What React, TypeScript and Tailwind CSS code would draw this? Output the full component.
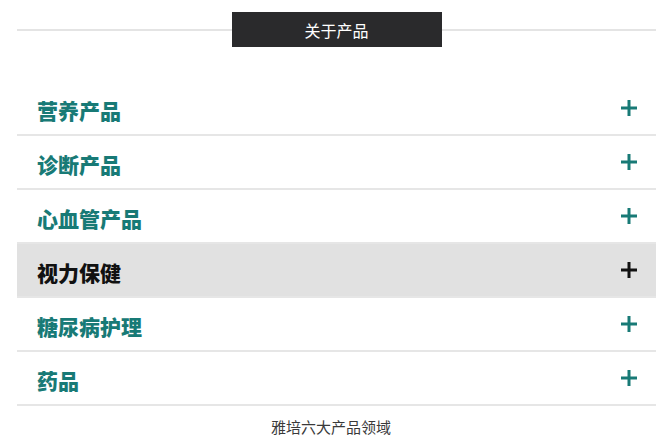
const items = [
  { label: '营养产品', active: false },
  { label: '诊断产品', active: false },
  { label: '心血管产品', active: false },
  { label: '视力保健', active: true },
  { label: '糖尿病护理', active: false },
  { label: '药品', active: false },
];

function Plus({ dark }: { dark: boolean }) {
  return (
    <svg width="18" height="18" viewBox="0 0 18 18" className={dark ? 'text-[#111]' : 'text-[#187a76]'}>
      <path d="M9 1v16M1 9h16" stroke="currentColor" strokeWidth="3" />
    </svg>
  );
}

export default function App() {
  return (
    <div
      className="w-[662px] h-[447px] bg-white overflow-hidden"
      style={{ fontFamily: '"Noto Sans CJK SC", "Liberation Sans", sans-serif' }}
    >
      <div className="relative ml-[17px] mr-[6px] mt-[12px] h-[35px] flex justify-center">
        <div className="absolute left-0 right-0 top-[17px] h-[2px] bg-[#e4e4e4]" />
        <div className="relative w-[210px] h-[35px] bg-[#2a2a2c] text-white text-[16px] flex items-center justify-center">
          关于产品
        </div>
      </div>

      <div className="ml-[17px] mr-[6px] mt-[35px]">
        {items.map((it) => (
          <div
            key={it.label}
            className={`h-[54px] flex items-center justify-between pl-[20px] pr-[18px] border-b-2 border-[#e6e6e6] ${
              it.active ? 'bg-[#e1e1e1]' : 'bg-white'
            }`}
          >
            <span
              className={`text-[21px] font-black pt-[6px] ${it.active ? 'text-[#111]' : 'text-[#187a76]'}`}
            >
              {it.label}
            </span>
            <Plus dark={it.active} />
          </div>
        ))}
      </div>

      <div className="text-center text-[15px] text-[#3a3a3a] mt-[10px]">雅培六大产品领域</div>
    </div>
  );
}
